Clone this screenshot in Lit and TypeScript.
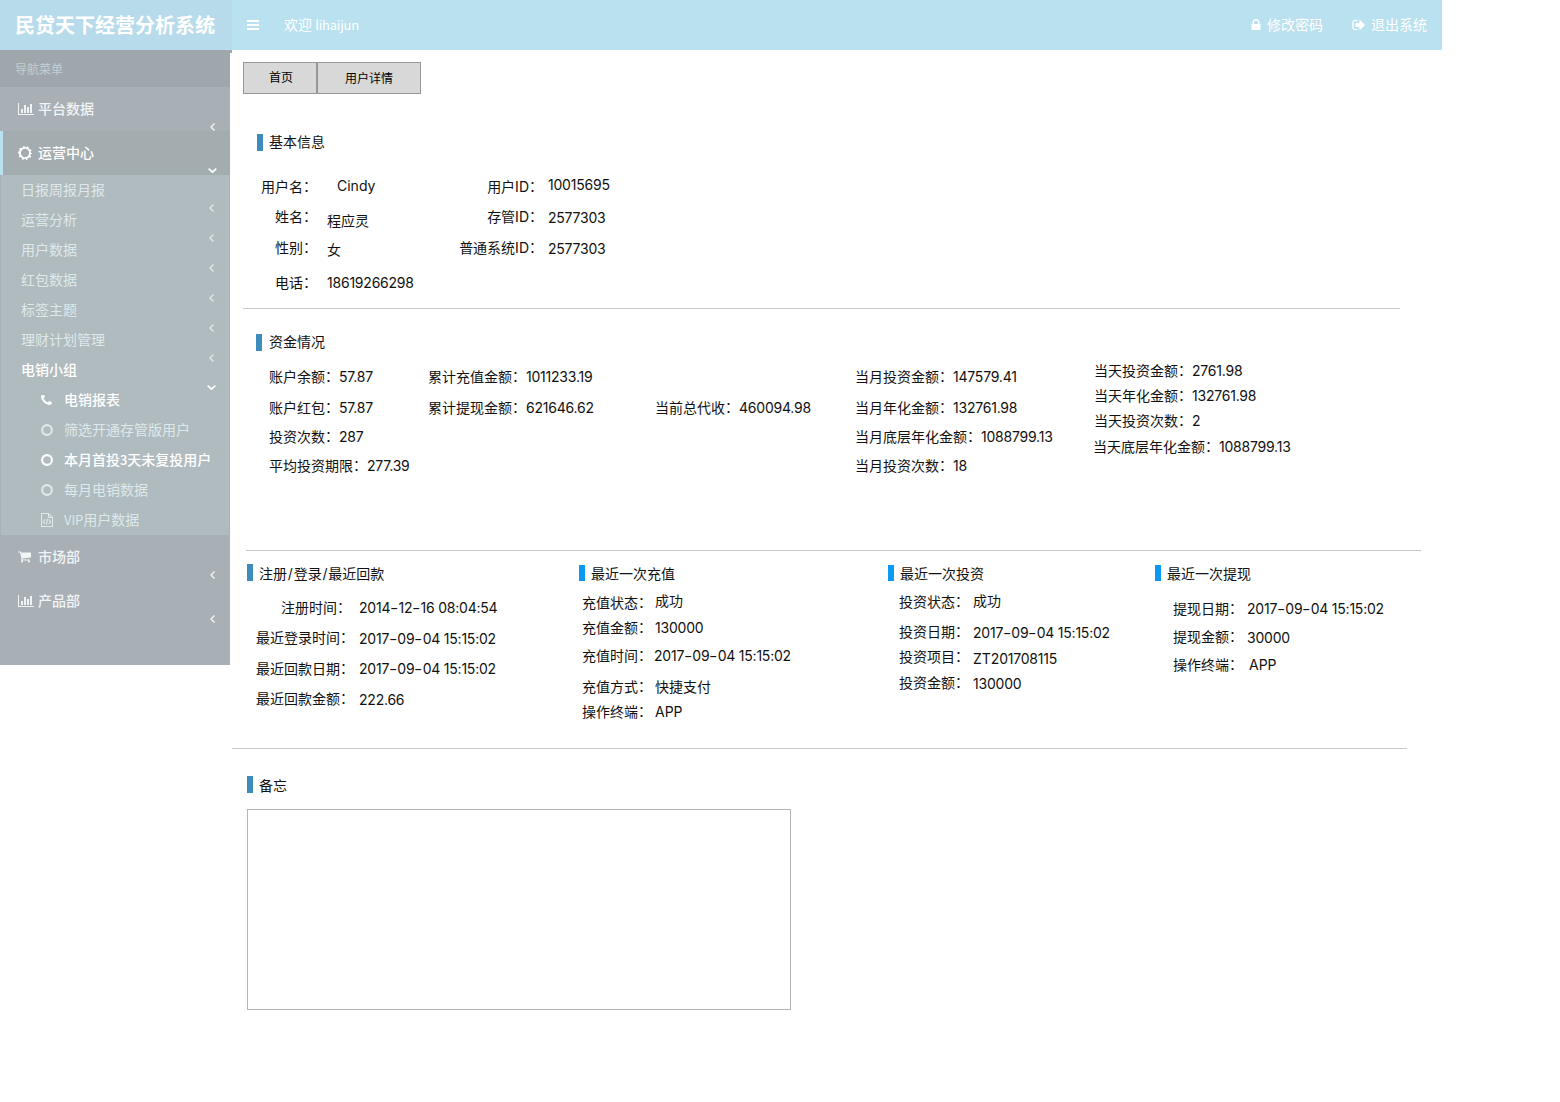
import { LitElement, html, css, svg } from "lit";
import { customElement, property } from "lit/decorators.js";

const ICONS: Record<string, { box: string; w: number; h: number; body: unknown }> = {
  bars: {
    box: "0 0 12 10", w: 12, h: 10,
    body: svg`<path fill="currentColor" d="M0 0h12v2H0zM0 4h12v2H0zM0 8h12v2H0z"/>`,
  },
  chart: {
    box: "0 0 16 14", w: 16, h: 14,
    body: svg`<path fill="currentColor" d="M0 1h1v11h15v1H0zM3 7h2v4H3zM6 3h2v8H6zM9 5h2v6H9zM12 2h2v9h-2z"/>`,
  },
  lock: {
    box: "320 128 1152 1536", w: 10, h: 12,
    body: svg`<path fill="currentColor" d="M640 768h512v-192q0-106-75-181t-181-75-181 75-75 181v192zm832 96v576q0 40-28 68t-68 28h-960q-40 0-68-28t-28-68v-576q0-40 28-68t68-28h32v-192q0-184 132-316t316-132 316 132 132 316v192h32q40 0 68 28t28 68z"/>`,
  },
  signout: {
    box: "0 0 1792 1792", w: 14, h: 14,
    body: svg`<path fill="currentColor" stroke="currentColor" stroke-width="40" d="M704 1440q0 4 1 20t.5 26.5-3 23.5-10 19.5-20.5 6.5h-320q-119 0-203.5-84.5t-84.5-203.5v-704q0-119 84.5-203.5t203.5-84.5h320q13 0 22.5 9.5t9.5 22.5q0 4 1 20t.5 26.5-3 23.5-10 19.5-20.5 6.5h-320q-66 0-113 47t-47 113v704q0 66 47 113t113 47h312l11.5 1 11.5 3 8 5.5 7 9 2 13.5zm928-544q0 26-19 45l-544 544q-19 19-45 19t-45-19-19-45v-288h-448q-26 0-45-19t-19-45v-384q0-26 19-45t45-19h448v-288q0-26 19-45t45-19 45 19l544 544q19 19 19 45z"/>`,
  },
  phone: {
    box: "192 256 1408 1408", w: 11, h: 11,
    body: svg`<path fill="currentColor" d="M1600 1240q0 27-10 70.5t-21 68.5q-21 50-122 106-94 51-186 51-27 0-52.5-3.5t-57.5-12.5-47.5-14.5-55.5-20.5-49-18q-98-35-175-83-128-79-264.5-215.5t-215.5-264.5q-48-77-83-175-3-9-18-49t-20.5-55.5-14.5-47.5-12.5-57.5-3.5-52.5q0-92 51-186 56-101 106-122 25-11 68.5-21t70.5-10q14 0 21 3 18 6 53 76 11 19 30 54t35 63.5 31 53.5q3 4 17.5 25t21.5 35.5 7 28.5q0 20-28.5 50t-62 55-62 53-28.5 46q0 9 5 22.5t8.5 20.5 14 24 11.5 19q76 137 174 235t235 174q2 1 19 11.5t24 14 20.5 8.5 22.5 5q18 0 46-28.5t53-62 55-62 50-28.5q14 0 28.5 7t35.5 21.5 25 17.5q25 15 53.5 31t63.5 35 54 30q70 35 76 53 3 7 3 21z"/>`,
  },
  cart: {
    box: "64 192 1664 1536", w: 13, h: 12,
    body: svg`<path fill="currentColor" d="M704 1536q0 52-38 90t-90 38-90-38-38-90 38-90 90-38 90 38 38 90zm896 0q0 52-38 90t-90 38-90-38-38-90 38-90 90-38 90 38 38 90zm128-1088v512q0 24-16.5 42.5t-40.5 21.5l-1044 122q13 60 13 70 0 16-24 64h920q26 0 45 19t19 45-19 45-45 19h-1024q-26 0-45-19t-19-45q0-11 8-31.5t16-36 21.5-40 15.5-29.5l-177-823h-204q-26 0-45-19t-19-45 19-45 45-19h256q16 0 28.5 6.5t19.5 15.5 13 24.5 8 26 5.5 29.5 4.5 26h1201q26 0 45 19t19 45z"/>`,
  },
  sun: {
    box: "0 0 14 14", w: 14, h: 14,
    body: svg`<circle cx="7" cy="7" r="5.1" fill="none" stroke="currentColor" stroke-width="1.9"/><circle cx="7" cy="7" r="6.3" fill="none" stroke="currentColor" stroke-width="1.4" stroke-dasharray="1.8 2.158" stroke-dashoffset=".9"/>`,
  },
  ring: {
    box: "0 0 12 12", w: 12, h: 12,
    body: svg`<circle cx="6" cy="6" r="4.9" fill="none" stroke="currentColor" stroke-width="2.1"/>`,
  },
  code: {
    box: "0 0 12 14", w: 12, h: 14,
    body: svg`<path fill="none" stroke="currentColor" stroke-width="1.1" d="M.5.5h7l4 4v9H.5zM7.5.5v4h4M4.2 6.2 2.4 8.7l1.8 2.3M7.8 6.2l1.8 2.5L7.8 11M6.7 5.9l-1.3 5.4"/>`,
  },
  left: {
    box: "0 0 5 8", w: 5, h: 8,
    body: svg`<path fill="none" stroke="currentColor" stroke-width="1.4" d="M4.5.5 1 4l3.5 3.5"/>`,
  },
  down: {
    box: "0 0 9 5", w: 9, h: 5,
    body: svg`<path fill="none" stroke="currentColor" stroke-width="1.6" d="M.7.6 4.5 4.2 8.3.6"/>`,
  },
};

const icon = (name: string) => {
  const i = ICONS[name];
  return svg`<svg class="icon" width=${i.w} height=${i.h} viewBox=${i.box}>${i.body}</svg>`;
};

/** A line of text, the y of its middle, and an optional extra class. */
type Line = [text: string, middle: number, cls?: string];

const LINE = 20;

@customElement("text-stack")
class TextStack extends LitElement {
  static styles = css`
    :host { display: flex; flex-direction: column; align-items: flex-start; white-space: pre; }
    :host([end]) { align-items: flex-end; }
    .line { height: 20px; line-height: 20px; flex: none; }
    .indent { padding-left: 10px; }
    .nudge { padding-left: 2px; }
    .tuck { margin-left: -1px; }
    .inset { padding-right: 3px; }
    .num { letter-spacing: -0.22px; }
    .colon { display: inline-block; transform: translateY(-1px); }
    .dash { display: inline-block; transform: scaleX(1.3); margin: 0 .9px; }
  `;
  @property({ attribute: false }) lines: Line[] = [];
  @property({ type: Number }) from = 0;

  /** Sets figures a little tighter, dashes wider, and full-width colons slightly raised. */
  private typeset(text: string) {
    return text.split(/(：|-|[\d.: ]+)/).map((part) => {
      if (part === "：") return html`<span class="colon">：</span>`;
      if (part === "-") return html`<span class="dash">-</span>`;
      return /^\d|^ /.test(part) ? html`<span class="num">${part}</span>` : part;
    });
  }

  render() {
    let y = this.from;
    return this.lines.map(([text, middle, cls]) => {
      const gap = middle - LINE / 2 - y;
      y = middle + LINE / 2;
      return html`<div class="line ${cls ?? ""}" style="margin-top:${gap}px">${this.typeset(text)}</div>`;
    });
  }
}

@customElement("side-menu")
class SideMenu extends LitElement {
  static styles = css`
    :host { display: block; position: relative; width: 230px; height: 615px; flex: none; background: #a8b0b6; color: #f0f4f5;
      font: 14px/20px "Noto Sans CJK SC", sans-serif; }
    :host::before { content: ""; position: absolute; left: 230px; top: 0; width: 2px; height: 3px; background: #9fa7ad; }
    .caption { height: 37px; line-height: 37px; padding-left: 15px; box-sizing: border-box; font-size: 12px; background: #9fa7ad; color: #c5cdd2; }
    .row { display: flex; align-items: center; box-sizing: border-box; }
    .icon { flex: none; display: block; }
    .label { flex: 1; white-space: nowrap; padding-bottom: 2px; }
    .latin { font-size: 13px; letter-spacing: -0.1px; }
    .top { height: 44px; padding: 0 15px 0 18px; font-weight: 500; }
    .top .slot { width: 20px; }
    .open { background: #a3acae; border-left: 3px solid #b9e1ef; padding: 0 13px 0 15px; color: #fff; }
    .tree { margin: 0 1px; background: #b0bbc0; color: #dfe8e9; }
    .sub { height: 30px; padding: 0 15px 0 20px; }
    .leaf { height: 30px; padding-left: 40px; }
    .leaf .slot { width: 23px; }
    .on { color: #fff; font-weight: 500; }
    .sub.on { padding-right: 13px; }
    .arrow { margin-top: 35px; }
    .open .arrow, .on .arrow { margin-top: 34px; }
  `;

  private top(name: string, label: string, open = false) {
    return html`<div class="row top ${open ? "open" : ""}">
      <span class="slot">${icon(name)}</span><span class="label">${label}</span>
      <span class="arrow">${icon(open ? "down" : "left")}</span>
    </div>`;
  }
  private sub(label: string, open = false) {
    return html`<div class="row sub ${open ? "on" : ""}">
      <span class="label">${label}</span><span class="arrow">${icon(open ? "down" : "left")}</span>
    </div>`;
  }
  private leaf(name: string, label: unknown, on = false) {
    return html`<div class="row leaf ${on ? "on" : ""}">
      <span class="slot">${icon(name)}</span><span class="label">${label}</span>
    </div>`;
  }

  render() {
    return html`
      <div class="caption">导航菜单</div>
      ${this.top("chart", "平台数据")}
      ${this.top("sun", "运营中心", true)}
      <div class="tree">
        ${["日报周报月报", "运营分析", "用户数据", "红包数据", "标签主题", "理财计划管理"].map((t) => this.sub(t))}
        ${this.sub("电销小组", true)}
        ${this.leaf("phone", "电销报表", true)}
        ${this.leaf("ring", "筛选开通存管版用户")}
        ${this.leaf("ring", html`本月首投<span class="latin">3</span>天未复投用户`, true)}
        ${this.leaf("ring", "每月电销数据")}
        ${this.leaf("code", html`<span class="latin">VIP</span>用户数据`)}
      </div>
      ${this.top("cart", "市场部")}
      ${this.top("chart", "产品部")}
    `;
  }
}

@customElement("app-root")
class AppRoot extends LitElement {
  static styles = css`
    :host { display: block; width: 1560px; height: 1102px; background: #fff; color: #111;
      font: 14px/20px Inter, "Noto Sans CJK SC", sans-serif; overflow: hidden; }
    .icon { display: block; flex: none; }
    .bar { display: flex; align-items: center; width: 1442px; height: 50px; background: #b9e1ef; color: #fff;
      font-family: "Noto Sans CJK SC", sans-serif; }
    .logo { width: 232px; height: 50px; line-height: 49px; text-align: center; font-size: 20px; font-weight: 700; background: #b7dbea; margin-right: 15px; padding-right: 2px; box-sizing: border-box; }
    .hello { margin-left: 25px; flex: 1; color: #fff; padding-bottom: 2px; }
    .name { font-size: 13px; letter-spacing: -0.2px; }
    .action { display: flex; align-items: center; gap: 6px; color: #fff; }
    .action span { padding-bottom: 2px; }
    .action + .action { margin: 0 15px 0 29px; gap: 5px; }
    .body { display: flex; }
    .main { flex: 1; display: flex; flex-direction: column; }
    .tabs { display: flex; margin: 12px 0 0 13px; height: 32px; font: 12px/28px "Noto Sans CJK SC", sans-serif; }
    .tab { box-sizing: border-box; height: 32px; border: 1px solid #979797; background: #d8d8d8; text-align: center; color: #000; }
    .home { width: 74px; padding-left: 2px; }
    .detail { width: 104px; line-height: 29px; }
    .heading { display: flex; align-items: center; height: 20px; white-space: nowrap; }
    .heading::before { content: ""; width: 6px; height: 17px; margin-right: 6px; background: #3c8dbc; }
    .records .heading::before, .memo .heading::before { margin-bottom: 3px; }
    .records .vivid::before { height: 16px; margin-bottom: 2px; background: #0a99f5; }
    .slash { margin: 0 .8px; }
    .rule { height: 1px; background: #c8c8c8; }
    .basic { height: 214px; box-sizing: border-box; padding-top: 38px; }
    .basic .heading { margin-left: 27px; }
    .basic .cols { display: grid; grid-template-columns: 87px 10px 132px 84px 5px 100px; }
    .rule.one { width: 1157px; margin-left: 13px; }
    .funds { height: 241px; box-sizing: border-box; padding-top: 23px; }
    .funds .heading { margin-left: 26px; }
    .funds .heading::before { margin-right: 7px; }
    .funds .cols { display: grid; grid-template-columns: 159px 227px 200px 239px 220px; margin-left: 39px; }
    .rule.two { width: 1175px; margin-left: 16px; }
    .records { height: 197px; display: grid; grid-template-columns: 332px 309px 267px 260px; padding: 13px 0 0 17px; box-sizing: border-box; }
    .pair { display: grid; }
    .signin { grid-template-columns: 107px 5px 180px; }
    .charge { grid-template-columns: 73px 180px; margin-left: 3px; }
    .invest { grid-template-columns: 74px 180px; margin-left: 11px; }
    .cash { grid-template-columns: 74px 180px; margin-left: 18px; }
    .rule.three { width: 1175px; margin-left: 2px; }
    .memo { padding: 27px 0 0 17px; }
    .note { width: 544px; height: 201px; box-sizing: border-box; border: 1px solid #b4b4b4; margin-top: 13px; }
  `;

  private stack(from: number, lines: Line[], end = false) {
    return html`<text-stack .from=${from} .lines=${lines} ?end=${end}></text-stack>`;
  }

  render() {
    return html`
      <div class="bar">
        <div class="logo">民贷天下经营分析系统</div>
        ${icon("bars")}
        <div class="hello">欢迎 <span class="name">lihaijun</span></div>
        <div class="action">${icon("lock")}<span>修改密码</span></div>
        <div class="action">${icon("signout")}<span>退出系统</span></div>
      </div>
      <div class="body">
        <side-menu></side-menu>
        <div class="main">
          <div class="tabs"><div class="tab home">首页</div><div class="tab detail">用户详情</div></div>

          <div class="basic">
            <div class="heading">基本信息</div>
            <div class="cols">
              ${this.stack(152, [["用户名：", 187], ["姓名：", 217], ["性别：", 248], ["电话：", 283]], true)}
              <span></span>
              ${this.stack(152, [["Cindy", 186, "indent"], ["程应灵", 221], ["女", 250], ["18619266298", 283]])}
              ${this.stack(152, [["用户ID：", 187], ["存管ID：", 217], ["普通系统ID：", 248]], true)}
              <span></span>
              ${this.stack(152, [["10015695", 185], ["2577303", 218], ["2577303", 249]])}
            </div>
          </div>
          <div class="rule one"></div>

          <div class="funds">
            <div class="heading">资金情况</div>
            <div class="cols">
              ${this.stack(352, [["账户余额：57.87", 377], ["账户红包：57.87", 408], ["投资次数：287", 437], ["平均投资期限：277.39", 466]])}
              ${this.stack(352, [["累计充值金额：1011233.19", 377], ["累计提现金额：621646.62", 408]])}
              ${this.stack(352, [["当前总代收：460094.98", 408]])}
              ${this.stack(352, [["当月投资金额：147579.41", 377], ["当月年化金额：132761.98", 408], ["当月底层年化金额：1088799.13", 437], ["当月投资次数：18", 466]])}
              ${this.stack(352, [["当天投资金额：2761.98", 371], ["当天年化金额：132761.98", 396], ["当天投资次数：2", 421], ["当天底层年化金额：1088799.13", 447, "tuck"]])}
            </div>
          </div>
          <div class="rule two"></div>

          <div class="records">
            <div>
              <div class="heading">注册<span class="slash">/</span>登录<span class="slash">/</span>最近回款</div>
              <div class="pair signin">
                ${this.stack(584, [["注册时间：", 608, "inset"], ["最近登录时间：", 638], ["最近回款日期：", 669], ["最近回款金额：", 699]], true)}
                <span></span>
                ${this.stack(584, [["2014-12-16 08:04:54", 608], ["2017-09-04 15:15:02", 639], ["2017-09-04 15:15:02", 669], ["222.66", 700]])}
              </div>
            </div>
            <div>
              <div class="heading vivid">最近一次充值</div>
              <div class="pair charge">
                ${this.stack(584, [["充值状态：", 603], ["充值金额：", 628], ["充值时间：", 656], ["充值方式：", 687], ["操作终端：", 712]])}
                ${this.stack(584, [["成功", 601], ["130000", 628], ["2017-09-04 15:15:02", 656, "tuck"], ["快捷支付", 687], ["APP", 712]])}
              </div>
            </div>
            <div>
              <div class="heading vivid">最近一次投资</div>
              <div class="pair invest">
                ${this.stack(584, [["投资状态：", 602], ["投资日期：", 632], ["投资项目：", 657], ["投资金额：", 683]])}
                ${this.stack(584, [["成功", 601], ["2017-09-04 15:15:02", 633], ["ZT201708115", 659], ["130000", 684]])}
              </div>
            </div>
            <div>
              <div class="heading vivid">最近一次提现</div>
              <div class="pair cash">
                ${this.stack(584, [["提现日期：", 609], ["提现金额：", 637], ["操作终端：", 665]])}
                ${this.stack(584, [["2017-09-04 15:15:02", 609], ["30000", 638], ["APP", 665, "nudge"]])}
              </div>
            </div>
          </div>
          <div class="rule three"></div>

          <div class="memo">
            <div class="heading">备忘</div>
            <div class="note"></div>
          </div>
        </div>
      </div>
    `;
  }
}
